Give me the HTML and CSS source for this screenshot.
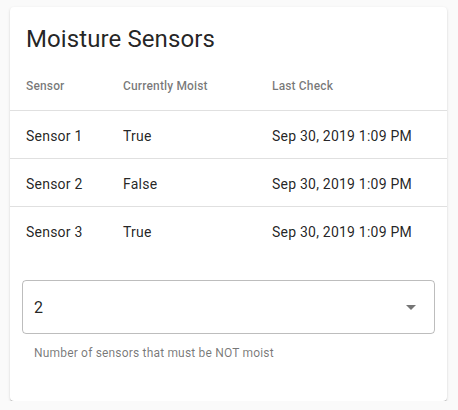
FILE: index.html
```html
<!DOCTYPE html>
<html>
<head>
<meta charset="utf-8">
<link rel="stylesheet" href="styles.css">
</head>
<body>
<div class="card">
  <div class="title">Moisture Sensors</div>
  <div class="table">
    <div class="row head">
      <div class="c1">Sensor</div>
      <div class="c2">Currently Moist</div>
      <div class="c3">Last Check</div>
    </div>
    <div class="row">
      <div class="c1">Sensor 1</div>
      <div class="c2">True</div>
      <div class="c3">Sep 30, 2019 1:09 PM</div>
    </div>
    <div class="row">
      <div class="c1">Sensor 2</div>
      <div class="c2">False</div>
      <div class="c3">Sep 30, 2019 1:09 PM</div>
    </div>
    <div class="row last">
      <div class="c1">Sensor 3</div>
      <div class="c2">True</div>
      <div class="c3">Sep 30, 2019 1:09 PM</div>
    </div>
  </div>
  <div class="field">
    <div class="select">
      <span class="value">2</span>
      <span class="arrow"></span>
    </div>
    <div class="hint">Number of sensors that must be NOT moist</div>
  </div>
</div>
</body>
</html>
```
FILE: styles.css
```css
html, body {
  margin: 0;
  padding: 0;
  background: #fafafa;
}
body {
  padding: 7px 0 0 10px;
  font-family: Roboto, "Liberation Sans", sans-serif;
  color: rgba(0, 0, 0, 0.87);
}
.card {
  box-sizing: border-box;
  width: 437px;
  height: 394px;
  background: #fff;
  border-radius: 4px;
  box-shadow: 0 2px 1px -1px rgba(0,0,0,.2), 0 1px 1px 0 rgba(0,0,0,.14), 0 1px 3px 0 rgba(0,0,0,.12);
  display: flex;
  flex-direction: column;
}
.title {
  padding: 16px 16px 0 16px;
  font-size: 24px;
  line-height: 32px;
  font-weight: 400;
  letter-spacing: 0.1px;
}
.table {
  display: flex;
  flex-direction: column;
}
.row {
  box-sizing: border-box;
  display: grid;
  grid-template-columns: 97px 149px 1fr;
  align-items: center;
  height: 48px;
  padding: 2px 0 0 16px;
  border-bottom: 1px solid rgba(0, 0, 0, 0.12);
  font-size: 14px;
  letter-spacing: 0.22px;
}
.row.head {
  height: 56px;
  padding-top: 6px;
  font-size: 12px;
  font-weight: 500;
  letter-spacing: 0.15px;
  color: rgba(0, 0, 0, 0.54);
}
.row.last {
  border-bottom: none;
}
.field {
  margin: 25px 12px 0 12px;
}
.select {
  box-sizing: border-box;
  height: 54px;
  border: 1px solid rgba(0, 0, 0, 0.26);
  border-radius: 4px;
  display: flex;
  align-items: center;
  justify-content: space-between;
  padding: 0 18px 0 11px;
  font-size: 16px;
}
.arrow {
  width: 0;
  height: 0;
  border-left: 5px solid transparent;
  border-right: 5px solid transparent;
  border-top: 5px solid rgba(0, 0, 0, 0.54);
}
.hint {
  padding: 11px 0 0 12px;
  font-size: 12px;
  line-height: 16px;
  letter-spacing: 0.18px;
  color: rgba(0, 0, 0, 0.54);
}
```
